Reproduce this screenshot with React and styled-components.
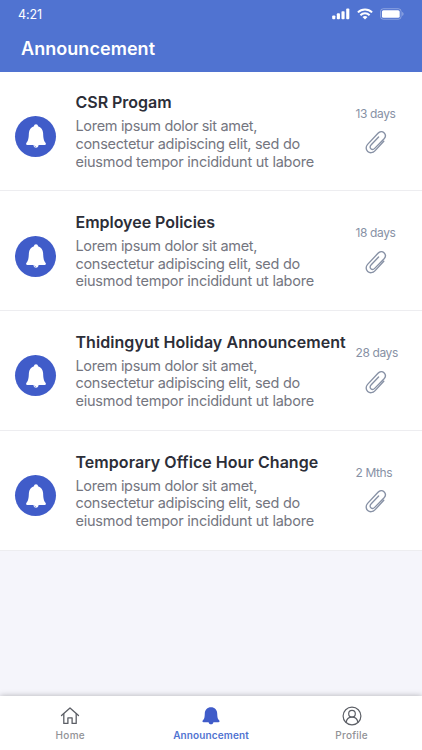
import styled, { createGlobalStyle } from 'styled-components';

const GlobalStyle = createGlobalStyle`
  * {
    box-sizing: border-box;
  }

  body {
    margin: 0;
    background-color: #f5f5fb;
    font-family: Inter, 'Liberation Sans', sans-serif;
  }

  svg {
    display: block;
  }
`;

const Screen = styled.div`
  height: 750px;
  display: flex;
  flex-direction: column;
  overflow: hidden;
  background-color: #f5f5fb;
`;

const Header = styled.header`
  flex: none;
  height: 71.6px;
  background-color: #5073d1;
  color: #fff;
`;

const StatusBar = styled.div`
  height: 28px;
  padding: 0 18px;
  display: flex;
  justify-content: space-between;
  align-items: center;
`;

const Clock = styled.span`
  font-size: 12.5px;
  letter-spacing: -0.1px;
`;

const StatusIcons = styled.div`
  display: flex;
  align-items: center;
  gap: 7px;
`;

const PageTitle = styled.h1`
  margin: 0;
  padding: 9px 21px 0;
  font-size: 18px;
  line-height: 24px;
  font-weight: 600;
  letter-spacing: 0.05px;
`;

const List = styled.main`
  flex: 1;
`;

const Row = styled.article`
  height: 119.75px;
  padding-left: 15px;
  display: flex;
  background-color: #fff;
  border-bottom: 1px solid #ededf0;
`;

const Badge = styled.div`
  flex: none;
  width: 41px;
  height: 41px;
  margin: 44.4px 19.2px 0 0.3px;
  display: flex;
  align-items: center;
  justify-content: center;
  border-radius: 50%;
  background-color: #405cc9;
  color: #fff;
`;

const Content = styled.div`
  flex: none;
  width: 280px;
  padding-top: 19.75px;
  white-space: nowrap;
`;

const RowTitle = styled.h2`
  margin: 0;
  color: #2c2e38;
  font-size: 16px;
  line-height: 22px;
  font-weight: 600;
  letter-spacing: ${({ $spacing }) => $spacing}px;
`;

const Excerpt = styled.p`
  margin: 4px 0 0;
  color: #74767f;
  font-size: 14.5px;
  line-height: 17.6px;
`;

const Line = styled.span`
  display: block;
  letter-spacing: ${({ $spacing }) => $spacing}px;
`;

const Meta = styled.div`
  padding-top: 34.1px;
  color: #8791a5;
`;

const Age = styled.div`
  font-size: 12px;
  line-height: 16px;
  letter-spacing: -0.38px;
  white-space: nowrap;
`;

const Attachment = styled.div`
  margin: 8.5px 0 0 10px;
`;

const TabBar = styled.nav`
  flex: none;
  height: 54px;
  display: grid;
  grid-template-columns: repeat(3, 1fr);
  background-color: #fff;
  box-shadow: 0 0 6px rgba(0, 0, 0, 0.28);
`;

const Tab = styled.div`
  padding-top: 10px;
  display: flex;
  flex-direction: column;
  align-items: center;
  color: ${({ $active }) => ($active ? '#405cc9' : '#5c5f66')};
`;

const TabLabel = styled.span`
  margin-top: 2px;
  font-size: 10px;
  line-height: 14px;
  font-weight: ${({ $active }) => ($active ? 600 : 500)};
  letter-spacing: ${({ $spacing }) => $spacing}px;
  color: ${({ $active }) => ($active ? '#5073d1' : '#929296')};
`;

function SignalIcon() {
  return (
    <svg width="18" height="12" viewBox="0 0 19 12" fill="#fff">
      <rect x="0.2" y="7.5" width="3.3" height="4" rx="1" />
      <rect x="5.1" y="5.3" width="3.3" height="6.2" rx="1" />
      <rect x="10" y="3" width="3.3" height="8.5" rx="1" />
      <rect x="15" y="0.3" width="3.3" height="11.2" rx="1" />
    </svg>
  );
}

function WifiIcon() {
  return (
    <svg width="16" height="12" viewBox="0 0 16 12" fill="none" stroke="#fff" strokeWidth="2">
      <path d="M.9 4.4a10.2 10.2 0 0 1 14.2 0" />
      <path d="M3.4 7.2a6.6 6.6 0 0 1 9.2 0" />
      <path d="M8 11.6 5.5 9.1a3.6 3.6 0 0 1 5 0z" fill="#fff" stroke="none" />
    </svg>
  );
}

function BatteryIcon() {
  return (
    <svg width="24" height="12" viewBox="0 0 25 12">
      <rect x="0.5" y="0.5" width="21.5" height="11" rx="3" fill="none" stroke="#fff" strokeOpacity="0.35" />
      <rect x="2" y="2" width="18.5" height="8" rx="1.6" fill="#fff" />
      <path d="M23.2 4v4c.8-.3 1.3-1.1 1.3-2s-.5-1.7-1.3-2z" fill="#fff" fillOpacity="0.4" />
    </svg>
  );
}

function BellIcon() {
  return (
    <svg width="22" height="26" viewBox="0 0 22 26" fill="currentColor">
      <path d="M11 1.300c-1.200 0-1.900.7-2 1.900C6 4 4.100 6.600 3.900 10c-.2 5.200-.6 7.700-2.500 9.900-.7.900-.3 2 .9 2h17.400c1.200 0 1.600-1.100.9-2-1.900-2.200-2.300-4.700-2.500-9.900C17.900 6.600 16 4 13 3.200c-.1-1.200-.8-1.900-2-1.900z" />
      <path d="M8.400 21.700h5.200c-.1 1.800-1.100 3-2.600 3s-2.500-1.200-2.600-3z" />
      <path d="M9.300 22.500c.3.900.9 1.300 1.700 1.300" fill="none" stroke="#405cc9" strokeWidth="0.5" />
    </svg>
  );
}

function ClipIcon() {
  return (
    <svg
      width="22"
      height="24"
      viewBox="0 0 22 24"
      fill="none"
      stroke="currentColor"
      strokeWidth="1.35"
      strokeLinecap="round"
    >
      <path d="M18.800 11.300 9.900 20.900c-2 2.200-5.200 2.400-7.200.6s-2.100-4.900-.1-7.100L13 3.300c1.700-1.800 4.300-2.100 6-.5s1.700 4.100.1 5.900L9.700 18.400c-1.200 1.200-2.700 1.400-3.800.4s-1.100-2.600.1-3.800L13.600 7" />
    </svg>
  );
}

function HomeIcon() {
  return (
    <svg
      width="20"
      height="20"
      viewBox="0 0 20 20"
      fill="none"
      stroke="currentColor"
      strokeWidth="1.3"
      strokeLinejoin="round"
      strokeLinecap="round"
    >
      <path d="M1.500 9.600 10 1.900l8.500 7.700" />
      <path d="M3.800 7.900V17.400h4.100v-5.600h4.200v5.600h4.100V7.900" />
    </svg>
  );
}

function TabBellIcon() {
  return (
    <svg width="20" height="20" viewBox="0 0 20 20" fill="currentColor">
      <path d="M10 1.300c-3.700 0-6.100 2.600-6.200 6.100-.1 4-.5 5.500-1.900 6.900-.9.900-.5 2 .7 2h14.800c1.200 0 1.600-1.100.7-2-1.400-1.400-1.800-2.900-1.900-6.900C16.100 3.900 13.700 1.300 10 1.300z" />
      <path d="M7.600 16h4.800c-.1 1.500-1 2.300-2.400 2.300S7.700 17.500 7.600 16z" />
    </svg>
  );
}

function ProfileIcon() {
  return (
    <svg width="20" height="20" viewBox="0 0 20 20" fill="none" stroke="currentColor" strokeWidth="1.2">
      <circle cx="10" cy="10" r="8.9" />
      <circle cx="10" cy="7.7" r="3.3" />
      <path d="M4.200 16.500c.3-3.200 2.700-5.300 5.800-5.300s5.500 2.100 5.800 5.300" />
    </svg>
  );
}

const excerpt = [
  { text: 'Lorem ipsum dolor sit amet,', spacing: -0.32 },
  { text: 'consectetur adipiscing elit, sed do', spacing: -0.3 },
  { text: 'eiusmod tempor incididunt ut labore', spacing: -0.24 },
];

const announcements = [
  { title: 'CSR Progam', age: '13 days', spacing: -0.02 },
  { title: 'Employee Policies', age: '18 days', spacing: -0.02 },
  { title: 'Thidingyut Holiday Announcement', age: '28 days', spacing: 0.06 },
  { title: 'Temporary Office Hour Change', age: '2 Mths', spacing: 0.05 },
];

const tabs = [
  { label: 'Home', Icon: HomeIcon, spacing: 0.3 },
  { label: 'Announcement', Icon: TabBellIcon, spacing: 0.13, active: true },
  { label: 'Profile', Icon: ProfileIcon, spacing: 0.25 },
];

export default function App() {
  return (
    <>
      <GlobalStyle />
      <Screen>
        <Header>
          <StatusBar>
            <Clock>4:21</Clock>
            <StatusIcons>
              <SignalIcon />
              <WifiIcon />
              <BatteryIcon />
            </StatusIcons>
          </StatusBar>
          <PageTitle>Announcement</PageTitle>
        </Header>
        <List>
          {announcements.map(({ title, age, spacing }) => (
            <Row key={title}>
              <Badge>
                <BellIcon />
              </Badge>
              <Content>
                <RowTitle $spacing={spacing}>{title}</RowTitle>
                <Excerpt>
                  {excerpt.map((line) => (
                    <Line key={line.text} $spacing={line.spacing}>
                      {line.text}
                    </Line>
                  ))}
                </Excerpt>
              </Content>
              <Meta>
                <Age>{age}</Age>
                <Attachment>
                  <ClipIcon />
                </Attachment>
              </Meta>
            </Row>
          ))}
        </List>
        <TabBar>
          {tabs.map(({ label, Icon, spacing, active }) => (
            <Tab key={label} $active={active}>
              <Icon />
              <TabLabel $active={active} $spacing={spacing}>
                {label}
              </TabLabel>
            </Tab>
          ))}
        </TabBar>
      </Screen>
    </>
  );
}
